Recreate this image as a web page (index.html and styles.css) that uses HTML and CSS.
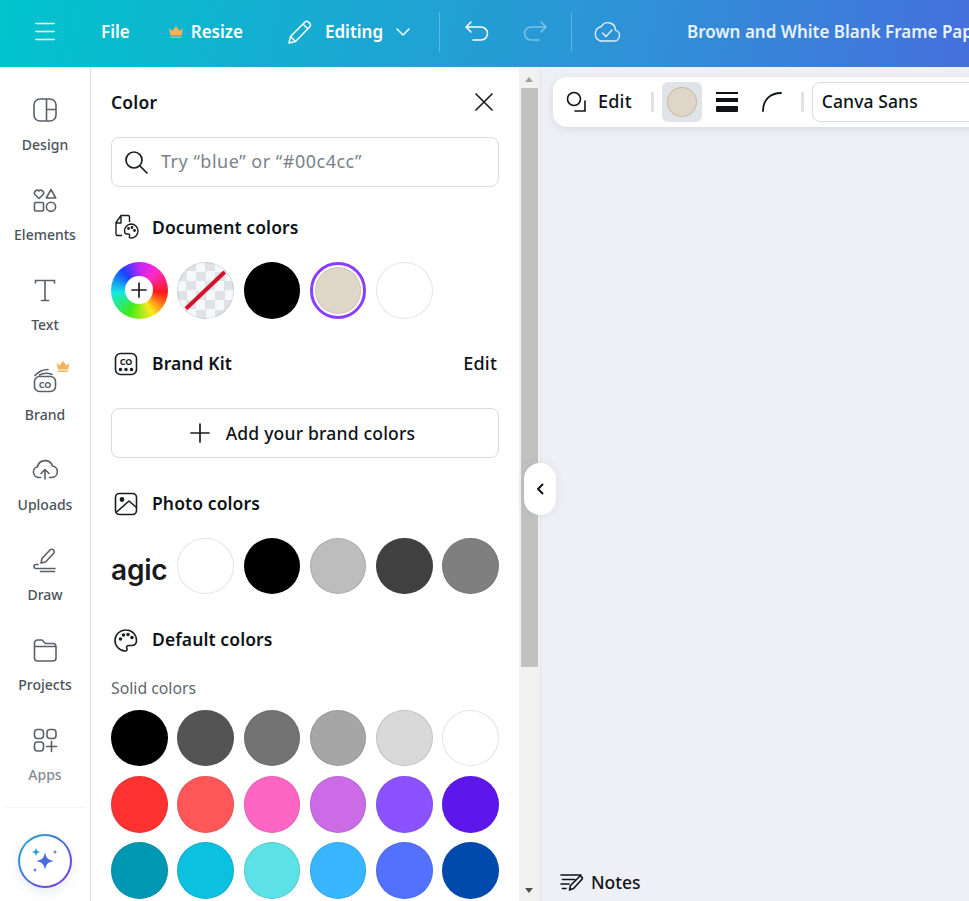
FILE: index.html
```html
<!DOCTYPE html>
<html lang="en">
<head>
<meta charset="utf-8">
<title>Color panel</title>
<link rel="stylesheet" href="styles.css">
</head>
<body>
<header class="topbar">
  <svg class="ic menu" width="24" height="24" viewBox="0 0 24 24" fill="none" stroke="#fff" stroke-width="1.6" stroke-linecap="round"><path d="M3 3.500h18M3 11.500h18M3 19.500h18"/></svg>
  <span class="tb-text file">File</span>
  <svg class="crown-top" width="16" height="14" viewBox="0 0 16 14"><path fill="#f5b25c" d="M1 3.2l3.2 2.6L8 1l3.800 4.800L15 3.200l-1.400 7H2.400zM2.600 11.400h10.800v1.400H2.600z"/></svg>
  <span class="tb-text resize">Resize</span>
  <svg class="pencil" width="26" height="26" viewBox="0 0 26 26" fill="none" stroke="#fff" stroke-width="1.5" stroke-linejoin="round"><path d="M2 24l1.500-6.500L18 3a2.400 2.400 0 0 1 3.400 0l1.400 1.400a2.400 2.400 0 0 1 0 3.400L8.500 22.400zM3.500 17.500l5 5M16 5l5 5"/></svg>
  <span class="tb-text editing">Editing</span>
  <svg class="chev" width="16" height="10" viewBox="0 0 16 10" fill="none" stroke="#fff" stroke-width="1.5" stroke-linecap="round" stroke-linejoin="round"><path d="M2 2l6 6 6-6"/></svg>
  <span class="tb-sep first"></span>
  <svg class="undo" width="26" height="24" viewBox="0 0 26 24" fill="none" stroke="#fff" stroke-width="1.5" stroke-linecap="round" stroke-linejoin="round"><path d="M7 2L2 7l5 5M2 7h15a6 6 0 0 1 0 13H9"/></svg>
  <svg class="redo" width="26" height="24" viewBox="0 0 26 24" fill="none" stroke="#fff" stroke-opacity=".4" stroke-width="1.5" stroke-linecap="round" stroke-linejoin="round"><path d="M19 2l5 5-5 5M24 7H9a6 6 0 0 0 0 13h8"/></svg>
  <span class="tb-sep second"></span>
  <svg class="cloud" width="28" height="24" viewBox="0 0 28 24" fill="none" stroke="#fff" stroke-opacity=".85" stroke-width="1.4" stroke-linecap="round" stroke-linejoin="round"><path d="M8 21h13a5.500 5.500 0 0 0 1.500-10.800A7.500 7.500 0 0 0 8.500 6.500 7.500 7.500 0 0 0 7.500 21zM9.500 13l3.500 3.500 6-6.500"/></svg>
  <span class="tb-title">Brown and White Blank Frame Paper</span>
</header>

<main class="workspace">
  <nav class="sidebar">
    <a class="nav-item">
      <svg width="26" height="26" viewBox="0 0 26 26" fill="none" stroke="#5a6068" stroke-width="1.6"><rect x="2" y="2" width="22" height="22" rx="6"/><path d="M14.500 2v22M14.500 12.500H24"/></svg>
      <span>Design</span>
    </a>
    <a class="nav-item">
      <svg width="26" height="26" viewBox="0 0 26 26" fill="none" stroke="#5a6068" stroke-width="1.6" stroke-linejoin="round"><path d="M7 11.500L2.700 7.200a2.800 2.800 0 0 1 4.300-3.400 2.800 2.800 0 0 1 4.300 3.400zM19 2.500l4.700 8.500h-9.400z"/><rect x="2.500" y="15.500" width="9" height="8.500" rx="1"/><circle cx="19" cy="19.800" r="4.600"/></svg>
      <span>Elements</span>
    </a>
    <a class="nav-item">
      <svg width="26" height="26" viewBox="0 0 26 26" fill="none" stroke="#5a6068" stroke-width="1.6" stroke-linecap="round"><path d="M3.500 6V3.500h19V6M13 3.500v20M9.500 23.500h7"/></svg>
      <span>Text</span>
    </a>
    <a class="nav-item brand-item">
      <svg width="26" height="26" viewBox="0 0 26 26" fill="none" stroke="#5a6068" stroke-width="1.6" stroke-linecap="round"><rect x="2.500" y="9.500" width="21" height="15" rx="5"/><path d="M3 8.500C7 4 12 2.500 16 2.500M7.500 8C11 6 16 6 20 7.500"/><text x="13" y="20.500" text-anchor="middle" class="co" stroke="none" fill="#5a6068">CO</text></svg>
      <svg class="crown-side" width="16" height="13" viewBox="0 0 16 14"><path fill="#f5b25c" d="M1 3.200l3.200 2.600L8 1l3.800 4.800L15 3.200l-1.400 7H2.400zM2.600 11.400h10.800v1.400H2.600z"/></svg>
      <span>Brand</span>
    </a>
    <a class="nav-item">
      <svg width="26" height="26" viewBox="0 0 26 26" fill="none" stroke="#5a6068" stroke-width="1.6" stroke-linecap="round" stroke-linejoin="round"><path d="M8.500 20.500H7a5.500 5.500 0 0 1-1.500-10.800A7.800 7.800 0 0 1 20.500 9a5.800 5.800 0 0 1-.5 11.500h-2.500M13 22v-9M9 16.500l4-4 4 4"/></svg>
      <span>Uploads</span>
    </a>
    <a class="nav-item">
      <svg width="26" height="26" viewBox="0 0 26 26" fill="none" stroke="#5a6068" stroke-width="1.6" stroke-linecap="round" stroke-linejoin="round"><path d="M9 16l1-4.500L18 3a2.400 2.400 0 0 1 3.500 0 2.400 2.400 0 0 1 0 3.500l-8 8.500zM6 17.500H4a1.700 1.700 0 0 0 0 4h19M8.500 24.500h14"/></svg>
      <span>Draw</span>
    </a>
    <a class="nav-item">
      <svg width="26" height="26" viewBox="0 0 26 26" fill="none" stroke="#5a6068" stroke-width="1.6" stroke-linejoin="round"><path d="M2.500 8V6a3 3 0 0 1 3-3h4.500l3.500 3.500H21a3 3 0 0 1 3 3V21a3 3 0 0 1-3 3H5.500a3 3 0 0 1-3-3zM2.500 9.500H24"/></svg>
      <span>Projects</span>
    </a>
    <a class="nav-item apps">
      <svg width="26" height="26" viewBox="0 0 26 26" fill="none" stroke="#5a6068" stroke-width="1.6" stroke-linecap="round"><rect x="2.500" y="2.500" width="9" height="9" rx="3"/><rect x="15" y="2.500" width="9" height="9" rx="3"/><rect x="2.500" y="15" width="9" height="9" rx="3"/><path d="M19.500 14.500v10M14.500 19.500h10"/></svg>
      <span>Apps</span>
    </a>
    <div class="magic-wrap">
      <div class="magic-ring">
        <div class="magic-inner">
          <svg width="30" height="30" viewBox="0 0 30 30"><path fill="#4a6bde" d="M15 6c1 6 3 8 9 9-6 1-8 3-9 9-1-6-3-8-9-9 6-1 8-3 9-9z"/><path fill="#2a9fd0" d="M6 1.500c.5 3 1.500 4 4.500 4.500-3 .5-4 1.500-4.500 4.500C5.500 7.500 4.500 6.500 1.500 6 4.500 5.500 5.500 4.500 6 1.500z"/><path fill="#5b7be0" d="M25 3.500c.3 1.800.8 2.200 2.500 2.500-1.700.3-2.200.8-2.500 2.500-.3-1.700-.8-2.200-2.500-2.500 1.700-.3 2.200-.7 2.500-2.500zM5 21.500c.3 1.800.8 2.200 2.500 2.500-1.700.3-2.200.8-2.500 2.500-.3-1.700-.8-2.200-2.500-2.500 1.700-.3 2.200-.7 2.500-2.500z"/></svg>
        </div>
      </div>
    </div>
  </nav>

  <section class="panel">
    <div class="panel-head">
      <h2>Color</h2>
      <svg width="20" height="20" viewBox="0 0 20 20" stroke="#1a1d21" stroke-width="1.7" stroke-linecap="round"><path d="M2 2l16 16M18 2L2 18"/></svg>
    </div>
    <div class="search">
      <svg width="24" height="24" viewBox="0 0 24 24" fill="none" stroke="#1a1d21" stroke-width="1.7" stroke-linecap="round"><circle cx="10" cy="10" r="8"/><path d="M16 16l7 7"/></svg>
      <span>Try “blue” or “#00c4cc”</span>
    </div>

    <div class="sec-head doc">
      <svg width="26" height="26" viewBox="0 0 26 26" fill="none" stroke="#1a1d21" stroke-width="1.4" stroke-linejoin="round"><path d="M9 21.500H4.500a1.500 1.500 0 0 1-1.500-1.500V8.500L8 1.500h7a1.500 1.500 0 0 1 1.500 1.500v5M8 1.500V9H3"/><path d="M18 10a7 7 0 0 1 0 14c-1.500 0-2-1-1.500-2 .6-1.200-.2-2-1.500-2h-1c-1.500 0-2.500-1-2.500-3a7 7 0 0 1 6.500-7z"/><circle cx="15.500" cy="14.500" r=".7" fill="#1a1d21"/><circle cx="19" cy="13.500" r=".7" fill="#1a1d21"/><circle cx="21.500" cy="16.500" r=".7" fill="#1a1d21"/></svg>
      <h3>Document colors</h3>
    </div>
    <div class="swatches">
      <div class="sw wheel"><div class="wheel-hole"><svg width="16" height="16" viewBox="0 0 16 16" stroke="#1a1d21" stroke-width="1.7" stroke-linecap="round"><path d="M8 1v14M1 8h14"/></svg></div></div>
      <div class="sw clear"><svg width="57" height="57" viewBox="0 0 57 57" stroke="#d3132c" stroke-width="4"><path d="M9 47L48 10"/></svg></div>
      <div class="sw c-000"></div>
      <div class="sw selected"><div class="sel-fill"></div></div>
      <div class="sw c-fff"></div>
    </div>

    <div class="sec-head brand">
      <svg width="26" height="26" viewBox="0 0 26 26" fill="none" stroke="#1a1d21" stroke-width="1.6"><rect x="2.500" y="2.500" width="21" height="21" rx="5"/><text x="13" y="14" text-anchor="middle" class="co-dark" stroke="none" fill="#1a1d21">CO</text><circle cx="7.500" cy="18.500" r="1" fill="#1a1d21"/><circle cx="13" cy="18.500" r="1" fill="#1a1d21"/><circle cx="18.500" cy="18.500" r="1" fill="#1a1d21"/></svg>
      <h3>Brand Kit</h3>
      <span class="edit-link">Edit</span>
    </div>
    <div class="add-brand">
      <svg width="22" height="22" viewBox="0 0 22 22" stroke="#1a1d21" stroke-width="1.7" stroke-linecap="round"><path d="M11 2v18M2 11h18"/></svg>
      <span>Add your brand colors</span>
    </div>

    <div class="sec-head photo">
      <svg width="26" height="26" viewBox="0 0 26 26" fill="none" stroke="#1a1d21" stroke-width="1.6" stroke-linejoin="round"><rect x="2.500" y="2.500" width="21" height="21" rx="4"/><circle cx="9" cy="8.500" r="1.600" fill="#1a1d21"/><path d="M3 21.500l13-11.500 7.500 6.500"/></svg>
      <h3>Photo colors</h3>
    </div>
    <div class="swatches">
      <div class="agic">agic</div>
      <div class="sw c-fff"></div>
      <div class="sw c-000"></div>
      <div class="sw c-bbb"></div>
      <div class="sw c-404"></div>
      <div class="sw c-7f7"></div>
    </div>

    <div class="sec-head default">
      <svg width="26" height="26" viewBox="0 0 26 26" fill="none" stroke="#1a1d21" stroke-width="1.6" stroke-linejoin="round"><path d="M13 3a10.500 10.500 0 0 0-1 21c1.800.2 2.500-1.200 1.800-2.500-.8-1.500.2-3 2-3h2.700c3 0 5-2 5-5C23.500 7.500 19 3 13 3z"/><circle cx="7.500" cy="12" r="1" fill="#1a1d21"/><circle cx="10.500" cy="8" r="1" fill="#1a1d21"/><circle cx="15" cy="7.500" r="1" fill="#1a1d21"/><circle cx="19" cy="10.500" r="1" fill="#1a1d21"/></svg>
      <h3>Default colors</h3>
    </div>
    <p class="solid-label">Solid colors</p>
    <div class="swatches grid-default">
      <div class="sw c-000"></div>
      <div class="sw c-545"></div>
      <div class="sw c-737"></div>
      <div class="sw c-a6a"></div>
      <div class="sw c-d9d"></div>
      <div class="sw c-fff"></div>
      <div class="sw c-red"></div>
      <div class="sw c-cor"></div>
      <div class="sw c-pnk"></div>
      <div class="sw c-orc"></div>
      <div class="sw c-vio"></div>
      <div class="sw c-ind"></div>
      <div class="sw c-tea"></div>
      <div class="sw c-cya"></div>
      <div class="sw c-tur"></div>
      <div class="sw c-sky"></div>
      <div class="sw c-blu"></div>
      <div class="sw c-nav"></div>
    </div>
  </section>

  <div class="scrollbar">
    <span class="arrow up"></span>
    <span class="thumb"></span>
    <span class="arrow down"></span>
  </div>

  <section class="canvas">
    <div class="collapse">
      <svg width="10" height="14" viewBox="0 0 10 14" fill="none" stroke="#0e1318" stroke-width="2" stroke-linecap="round" stroke-linejoin="round"><path d="M7.500 2.500L3 7l4.500 4.500"/></svg>
    </div>
    <div class="toolbar">
      <svg class="tool-edit-ic" width="24" height="24" viewBox="0 0 24 24" fill="none" stroke="#0e1318" stroke-width="1.6" stroke-linecap="round"><circle cx="9" cy="9" r="6.500"/><path d="M20 11v10H10"/></svg>
      <span class="tool-edit">Edit</span>
      <span class="tool-sep s1"></span>
      <div class="tool-color"><div class="tool-dot"></div></div>
      <div class="tool-lines"><i class="l1"></i><i class="l2"></i><i class="l3"></i></div>
      <svg class="tool-corner" width="22" height="22" viewBox="0 0 22 22" fill="none" stroke="#0e1318" stroke-width="1.8" stroke-linecap="round"><path d="M2 20C2 9 9 2 20 2"/></svg>
      <span class="tool-sep s2"></span>
      <div class="font-box">Canva Sans</div>
    </div>
    <div class="notes">
      <svg width="24" height="20" viewBox="0 0 24 20" fill="none" stroke="#0e1318" stroke-width="1.6" stroke-linecap="round" stroke-linejoin="round"><path d="M1 3h20M2.500 7.500h12M1 12h8M2.500 16.500h3.500M9.500 18l1-4.500L19 5a1.800 1.800 0 0 1 2.800 2.500l-8.300 9z"/></svg>
      <span>Notes</span>
    </div>
  </section>
</main>
</body>
</html>
```

FILE: styles.css
```css
* { box-sizing: border-box; }
html, body { margin: 0; height: 100%; overflow: hidden; }
body {
  font-family: "Noto Sans", "Open Sans", sans-serif;
  color: #0e1318;
  background: #fff;
  display: flex;
  flex-direction: column;
  width: 969px;
  height: 901px;
}
h2, h3, p { margin: 0; }

/* top bar */
.topbar {
  flex: 0 0 67px;
  display: flex;
  align-items: center;
  background: linear-gradient(100deg, #00c4cc 0%, #2b96d6 60%, #4570dd 100%);
  color: #fff;
  padding: 0 0 4px 33px;
  white-space: nowrap;
  overflow: hidden;
}
.topbar svg { flex: none; }
.tb-text { font-size: 17px; font-weight: 600; }
.file { margin-left: 44px; }
.crown-top { margin-left: 38px; }
.resize { margin-left: 7px; }
.pencil { margin-left: 44px; }
.editing { margin-left: 12px; }
.chev { margin-left: 12px; }
.tb-sep { width: 1px; height: 40px; background: rgba(255,255,255,.25); flex: none; }
.tb-sep.first { margin-left: 28px; }
.undo { margin-left: 24px; }
.redo { margin-left: 32px; }
.tb-sep.second { margin-left: 23px; }
.cloud { margin-left: 21px; }
.tb-title { margin-left: 66px; font-size: 17px; font-weight: 600; color: #e8f3fb; }

/* workspace */
.workspace { flex: 1; display: flex; min-height: 0; }

/* sidebar */
.sidebar {
  flex: 0 0 91px;
  border-right: 1px solid #dfe1e4;
  display: flex;
  flex-direction: column;
  padding-top: 30px;
  background: #fff;
}
.nav-item {
  height: 90px;
  display: flex;
  flex-direction: column;
  align-items: center;
  position: relative;
  flex: none;
}
.nav-item svg { flex: none; }
.nav-item span { font-size: 14px; line-height: 20px; margin-top: 12px; color: #4b525a; font-weight: 500; }
.nav-item.apps { height: 80px; }
.nav-item.apps span { color: #858b93; }
.crown-side { position: absolute; left: 55px; top: -7px; }
.co { font: 700 9px "Noto Sans", sans-serif; }
.co-dark { font: 700 9px "Noto Sans", sans-serif; }
.magic-wrap {
  border-top: 1px solid #f6f7f8;
  margin: 0 4px;
  padding: 26px 0 0 14px;
}
.magic-ring {
  width: 54px;
  height: 54px;
  border-radius: 50%;
  padding: 2px;
  background: linear-gradient(135deg, #16b3cf, #7d2ae8);
  box-shadow: 0 4px 12px rgba(64,87,109,.12);
}
.magic-inner {
  width: 100%;
  height: 100%;
  border-radius: 50%;
  background: #fff;
  display: flex;
  align-items: center;
  justify-content: center;
}

/* panel */
.panel {
  flex: 0 0 428px;
  padding: 0 20px;
  background: #fff;
  overflow: hidden;
  position: relative;
}
.panel-head {
  height: 70px;
  display: flex;
  align-items: center;
  justify-content: space-between;
  padding-right: 5px;
}
.panel-head h2 { font-size: 17.500px; font-weight: 600; letter-spacing: .2px; }
.search {
  height: 50px;
  border: 1px solid #d9dbde;
  border-radius: 8px;
  display: flex;
  align-items: center;
  padding: 0 0 0 12px;
  gap: 13px;
}
.search span { font-size: 18px; letter-spacing: .5px; color: #7a828a; padding-bottom: 2px; }
.sec-head {
  display: flex;
  align-items: center;
  height: 26px;
}
.sec-head svg { flex: none; margin-left: 2px; }
.sec-head h3 { font-size: 17.500px; letter-spacing: .1px; font-weight: 600; margin-left: 13px; white-space: nowrap; }
.sec-head.brand h3, .sec-head.photo h3, .sec-head.default h3, .edit-link { padding-bottom: 2px; }
.sec-head.doc { margin-top: 27px; margin-bottom: 22px; }
.sec-head.brand { margin-top: 32px; }
.edit-link { margin-left: auto; margin-right: 2px; font-size: 18px; letter-spacing: .2px; font-weight: 500; }
.add-brand {
  margin-top: 31px;
  height: 50px;
  border: 1px solid #d9dbde;
  border-radius: 8px;
  display: flex;
  align-items: center;
  justify-content: center;
  gap: 15px;
  padding-right: 6px;
}
.add-brand span { font-size: 17.500px; letter-spacing: .2px; font-weight: 500; }
.sec-head.photo { margin-top: 33px; margin-bottom: 21px; }
.sec-head.default { margin-top: 32px; }

.swatches {
  display: grid;
  grid-template-columns: repeat(6, minmax(0, 1fr));
  gap: 9.600px;
}
.sw {
  aspect-ratio: 1;
  border-radius: 50%;
  box-shadow: inset 0 0 0 1px rgba(57,76,96,.15);
}
.grid-default { margin-top: 12px; }
.solid-label { margin-top: 25px; font-size: 15.800px; line-height: 20px; color: #5f666e; }
.c-000 { background: #000; box-shadow: none; }
.c-fff { background: #fff; }
.c-bbb { background: #bdbdbd; }
.c-404 { background: #404040; }
.c-7f7 { background: #7f7f7f; }
.c-545 { background: #545454; }
.c-737 { background: #737373; }
.c-a6a { background: #a6a6a6; }
.c-d9d { background: #d9d9d9; }
.c-red { background: #ff3131; }
.c-cor { background: #ff5757; }
.c-pnk { background: #ff66c4; }
.c-orc { background: #cb6ce6; }
.c-vio { background: #8c52ff; }
.c-ind { background: #5e17eb; }
.c-tea { background: #0097b2; }
.c-cya { background: #0cc0df; }
.c-tur { background: #5ce1e6; }
.c-sky { background: #38b6ff; }
.c-blu { background: #5271ff; }
.c-nav { background: #004aad; }

.wheel {
  background: conic-gradient(#c026f5 0deg, #ff2bd0 40deg, #ff1a1a 95deg, #ffe81a 150deg, #3dea1a 205deg, #14e8e0 265deg, #1a40ff 320deg, #c026f5 360deg);
  display: flex;
  align-items: center;
  justify-content: center;
  box-shadow: none;
}
.wheel-hole {
  width: 28px;
  height: 28px;
  border-radius: 50%;
  background: #fff;
  display: flex;
  align-items: center;
  justify-content: center;
}
.clear {
  overflow: hidden;
  background: repeating-conic-gradient(#dfe2e6 0 25%, #f7f8f9 0 50%) 0 0 / 19px 19px;
}
.clear svg { display: block; width: 100%; height: 100%; }
.selected {
  box-shadow: none;
  border: 3px solid #8b3dff;
  padding: 2px;
  background: #fff;
}
.sel-fill {
  width: 100%;
  height: 100%;
  border-radius: 50%;
  background: #dfd6c8;
  box-shadow: inset 0 0 0 1px rgba(57,76,96,.1);
}
.agic {
  font-family: Inter, "Noto Sans", sans-serif;
  font-size: 28px;
  font-weight: 600;
  line-height: 65px;
  height: 57px;
  letter-spacing: -0.2px;
  color: #1a1a1a;
  overflow: hidden;
  white-space: nowrap;
}

/* scrollbar */
.scrollbar {
  flex: 0 0 22px;
  background: #f1f1f1;
  border-right: 1px solid #e4e6ea;
  display: flex;
  flex-direction: column;
  align-items: center;
  padding-right: 1px;
}
.thumb { width: 17px; height: 579px; background: #c1c1c1; margin-top: 6px; }
.arrow { width: 0; height: 0; border-left: 4.500px solid transparent; border-right: 4.500px solid transparent; }
.arrow.up { border-bottom: 5px solid #a3a3a3; margin-top: 10px; }
.arrow.down { border-top: 5px solid #505050; margin-top: 221px; }

/* canvas */
.canvas {
  flex: 1;
  background: #eef0f5;
  position: relative;
  min-width: 0;
  z-index: 2;
}
.collapse {
  position: absolute;
  left: -17px;
  top: 396px;
  width: 32px;
  height: 52px;
  background: #fff;
  border-radius: 16px;
  display: flex;
  align-items: center;
  justify-content: center;
  box-shadow: 0 0 10px rgba(64,87,109,.1);
}
.toolbar {
  position: absolute;
  left: 12px;
  top: 10px;
  width: 460px;
  height: 50px;
  background: #fff;
  border-radius: 14px;
  box-shadow: 0 2px 8px rgba(64,87,109,.14);
  display: flex;
  align-items: center;
  padding-left: 12px;
  white-space: nowrap;
}
.toolbar > * { flex: none; }
.tool-edit { margin-left: 9px; font-size: 18px; letter-spacing: .2px; font-weight: 500; padding-bottom: 3px; }
.tool-sep { width: 3px; height: 20px; background: #dfe1e4; border-radius: 1px; }
.tool-sep.s1 { margin-left: 19px; }
.tool-color {
  margin-left: 8px;
  width: 40px;
  height: 40px;
  background: #e0e3e7;
  border-radius: 6px;
  display: flex;
  align-items: center;
  justify-content: center;
}
.tool-dot {
  width: 30px;
  height: 30px;
  border-radius: 50%;
  background: #dfd6c8;
  box-shadow: inset 0 0 0 1px rgba(120,100,70,.25);
}
.tool-lines {
  margin-left: 14px;
  width: 22px;
  display: flex;
  flex-direction: column;
  gap: 4px;
}
.tool-lines i { display: block; background: #0e1318; }
.l1 { height: 2px; }
.l2 { height: 4px; }
.l3 { height: 6px; border-radius: 1px; }
.tool-corner { margin-left: 23px; }
.tool-sep.s2 { margin-left: 18px; }
.font-box {
  margin-left: 8px;
  width: 200px;
  height: 40px;
  border: 1px solid #d9dbde;
  border-radius: 8px;
  display: flex;
  align-items: center;
  padding: 0 0 2px 9px;
  font-size: 17.500px;
  letter-spacing: .1px;
  font-weight: 500;
}
.notes {
  position: absolute;
  left: 19px;
  bottom: 7px;
  display: flex;
  align-items: center;
  gap: 7px;
  font-size: 17.500px;
  font-weight: 500;
}
```
